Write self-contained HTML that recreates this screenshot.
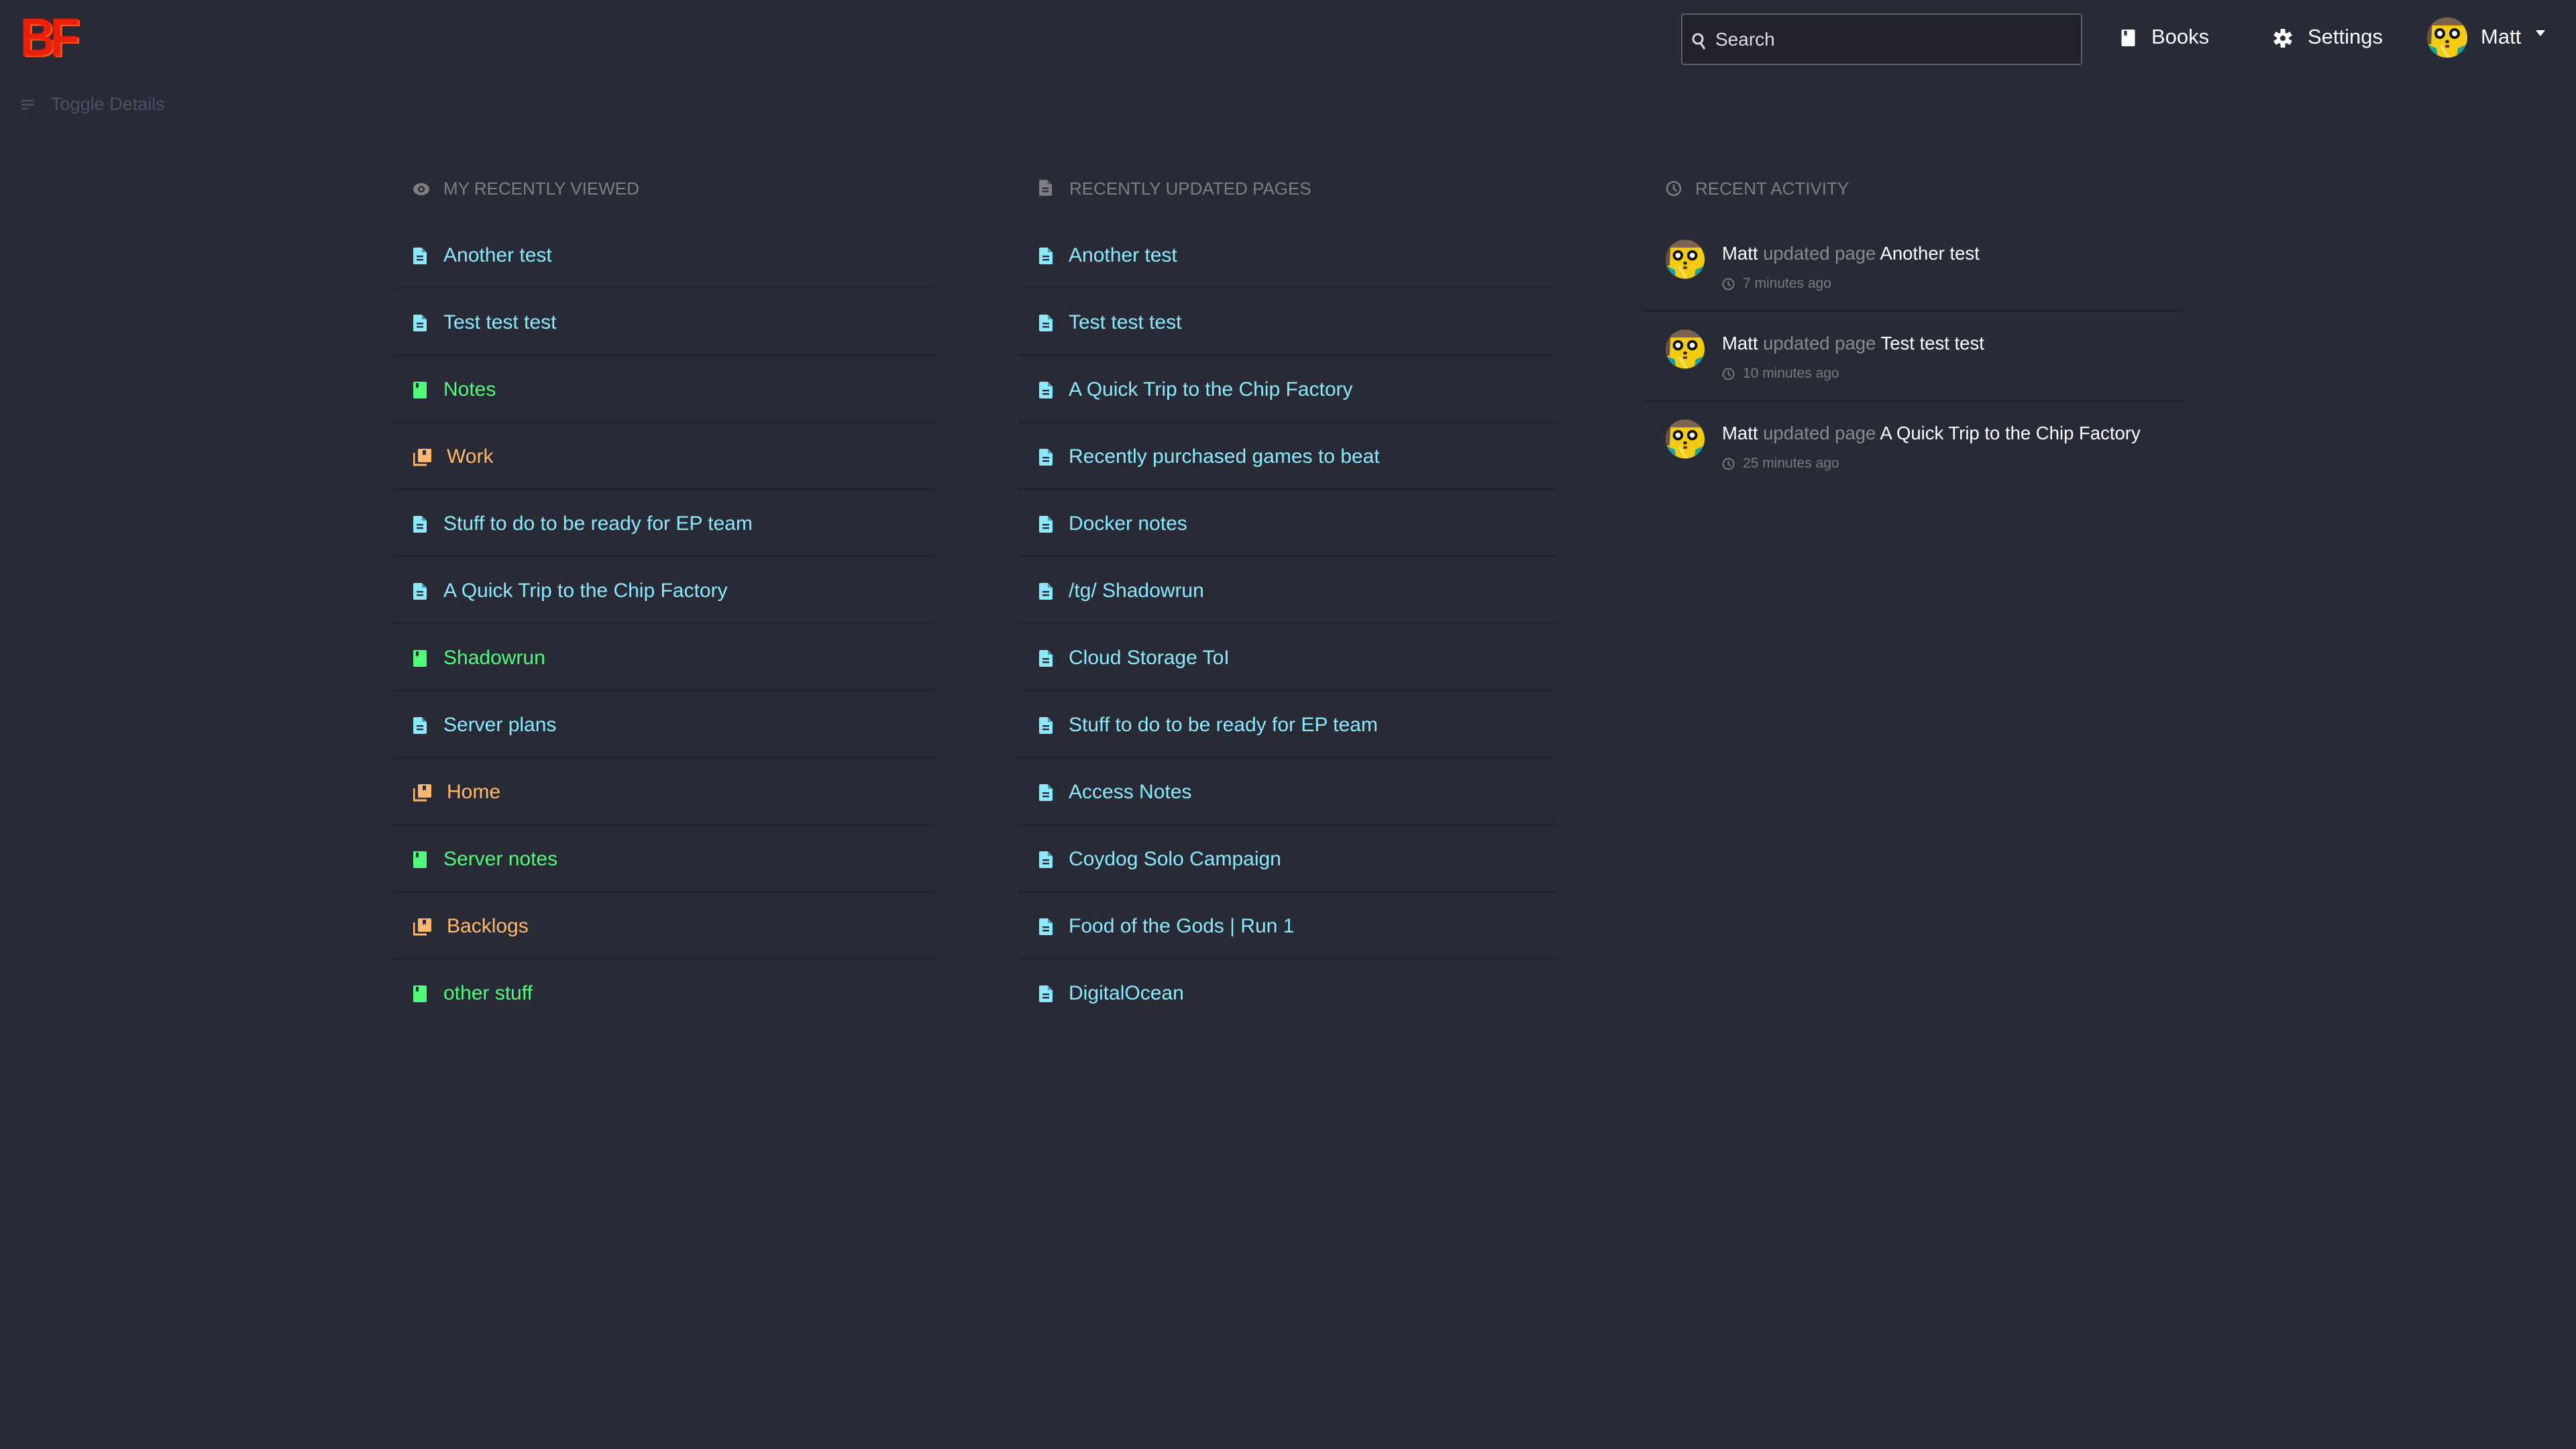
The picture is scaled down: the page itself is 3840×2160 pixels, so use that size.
<!DOCTYPE html>
<html><head><meta charset="utf-8">
<style>
*{margin:0;padding:0;box-sizing:border-box}
html,body{width:3840px;height:2160px;background:#282a36;overflow:hidden}
body{font-family:"Liberation Sans",sans-serif;position:relative;color:#ddd}
.a{position:absolute;white-space:nowrap}
.logo{left:30px;top:10px;font-size:80px;font-weight:bold;color:#e8200c;letter-spacing:-8px;transform:scaleX(.9);transform-origin:left;text-shadow:3px 2px 0 #ff5a1a,0 0 3px #c00}
.search{left:2506px;top:20px;width:598px;height:77px;border:2px solid #5d5f66;border-radius:4px;background:#21222c}
.search span{position:absolute;left:49px;top:21px;font-size:28px;color:#ddd}
.nav{font-size:31px;color:#fff;top:37px}
.toggle{left:30px;top:140px;font-size:27px;color:#4a5068}
.card{position:absolute;top:233px;width:803px}
.head{position:absolute;top:33px;font-size:26px;color:#7e7e7e;white-space:nowrap}
.row{position:absolute;left:0;width:803px;height:100px;border-bottom:3px solid #21222c}
.row .t{position:absolute;top:33px;font-size:30px;white-space:nowrap}
.row svg{position:absolute;top:38px}
.p{color:#8be9fd}.b{color:#50fa7b}.s{color:#ffb86c}
.act{position:absolute;left:0;width:803px;height:134px;border-bottom:3px solid #21222c}
.act .m{position:absolute;left:117px;top:31px;font-size:27.5px;color:#fff;white-space:nowrap}
.act .m i{font-style:normal;color:#8a8a8a}
.act .tm{position:absolute;left:148px;top:80px;font-size:21px;color:#7a7a7a;white-space:nowrap}
.act svg.av{position:absolute;left:33px;top:26px}
</style></head><body>
<svg width="0" height="0" style="position:absolute">
<defs>
<symbol id="av" viewBox="0 0 60 60">
<clipPath id="c"><circle cx="30" cy="30" r="30"/></clipPath>
<g clip-path="url(#c)">
<rect width="60" height="60" fill="#f2cc12"/>
<rect width="60" height="12" fill="#7a6450"/>
<path d="M0 40 L14 46 L16 60 L0 60Z" fill="#1aa0a0"/>
<path d="M60 40 L46 46 L44 60 L60 60Z" fill="#1aa0a0"/>
<path d="M0 0 L8 0 L6 40 L0 40Z" fill="#6a5040"/>
<circle cx="19" cy="24" r="8" fill="#111"/><circle cx="19" cy="24" r="4" fill="#fff"/>
<circle cx="41" cy="24" r="8" fill="#111"/><circle cx="41" cy="24" r="4" fill="#fff"/>
<ellipse cx="30" cy="36" rx="3" ry="2.5" fill="#222"/>
<rect x="27" y="41" width="6" height="4" fill="#6a3020"/>
<path d="M22 40 L34 60 L30 60 L20 44Z" fill="#f8f0a0" opacity=".6"/>
</g></symbol>
<symbol id="pg" viewBox="0 0 20 25"><path d="M2 0H13L20 7V23a2 2 0 0 1-2 2H2a2 2 0 0 1-2-2V2a2 2 0 0 1 2-2Z" fill="currentColor"/><path d="M13 0V7H20" fill="#282a36" opacity=".45"/><rect x="5" y="12" width="10" height="2.4" fill="#282a36"/><rect x="5" y="17" width="10" height="2.4" fill="#282a36"/></symbol>
<symbol id="bk" viewBox="0 0 20 25"><rect width="20" height="25" rx="2" fill="currentColor"/><path d="M4 2H8V10L6 8L4 10Z" fill="#282a36"/></symbol>
<symbol id="sh" viewBox="0 0 27 26"><rect x="7" y="0" width="20" height="20" rx="2" fill="currentColor"/><path d="M14 2H19V10L16.5 8L14 10Z" fill="#282a36"/><path d="M1 6V24H20" fill="none" stroke="currentColor" stroke-width="3"/></symbol>
</defs></svg>

<div class="a logo">BF</div>
<div class="a toggle"><svg width="22" height="22" viewBox="0 0 22 22" style="vertical-align:-3px;margin-right:24px"><path d="M2 5H20M2 11H20M2 17H12" stroke="#4a5068" stroke-width="2.5" fill="none"/></svg>Toggle Details</div>

<div class="a search"><svg width="22" height="26" viewBox="0 0 22 26" style="position:absolute;left:14px;top:27px"><circle cx="9" cy="9" r="7" stroke="#ddd" stroke-width="3" fill="none"/><path d="M13 15L19 24" stroke="#ddd" stroke-width="3"/></svg><span>Search</span></div>
<svg class="a" style="left:3162px;top:44px;color:#fff" width="21" height="25"><use href="#bk"/></svg>
<div class="a nav" style="left:3207px">Books</div>
<svg class="a" style="left:3389px;top:43px" width="28" height="28" viewBox="0 0 28 28"><g fill="#fff" transform="translate(14 14)"><circle r="9"/><rect x="-3.5" y="-14" width="7" height="28" rx="1"/><rect x="-3.5" y="-14" width="7" height="28" rx="1" transform="rotate(60)"/><rect x="-3.5" y="-14" width="7" height="28" rx="1" transform="rotate(120)"/></g><circle cx="14" cy="14" r="4" fill="#282a36"/></svg>
<div class="a nav" style="left:3440px">Settings</div>
<svg class="a" style="left:3618px;top:26px" width="60" height="60"><use href="#av"/></svg>
<div class="a nav" style="left:3698px">Matt</div>
<svg class="a" style="left:3780px;top:45px" width="14" height="10"><path d="M0 0H14L7 9Z" fill="#fff"/></svg>

<div class="card" style="left:588px">
<div class="head" style="left:28px"><svg width="24" height="18" viewBox="0 0 24 18" style="vertical-align:-1px;margin-right:21px"><ellipse cx="12" cy="9" rx="12" ry="9" fill="#7e7e7e"/><circle cx="12" cy="9" r="5" fill="#282a36"/><circle cx="12" cy="9" r="2.5" fill="#7e7e7e"/></svg>MY RECENTLY VIEWED</div>
</div>
<div class="card" style="left:1518px">
<div class="head" style="left:31px"><svg width="19" height="24" style="vertical-align:-2px;margin-right:26px;color:#7e7e7e"><use href="#pg"/></svg>RECENTLY UPDATED PAGES</div>
</div>
<div class="card" style="left:2450px">
<div class="head" style="left:33px"><svg width="24" height="24" viewBox="0 0 24 24" style="vertical-align:-3px;margin-right:20px"><circle cx="12" cy="12" r="10" stroke="#7e7e7e" stroke-width="2.5" fill="none"/><path d="M12 6V12L16 16" stroke="#7e7e7e" stroke-width="2.5" fill="none"/></svg>RECENT ACTIVITY</div>
</div>

<div class="card" style="left:2450px">
<div class="act" style="top:98px"><svg class="av" width="58" height="59"><use href="#av"/></svg><div class="m">Matt <i>updated page</i> Another test</div><div class="tm"><svg width="19" height="19" viewBox="0 0 24 24" style="position:absolute;left:-31px;top:3px"><circle cx="12" cy="12" r="10" stroke="#7a7a7a" stroke-width="2.5" fill="none"/><path d="M12 6V12L16 16" stroke="#7a7a7a" stroke-width="2.5" fill="none"/></svg>7 minutes ago</div></div>
<div class="act" style="top:232px"><svg class="av" width="58" height="59"><use href="#av"/></svg><div class="m">Matt <i>updated page</i> Test test test</div><div class="tm"><svg width="19" height="19" viewBox="0 0 24 24" style="position:absolute;left:-31px;top:3px"><circle cx="12" cy="12" r="10" stroke="#7a7a7a" stroke-width="2.5" fill="none"/><path d="M12 6V12L16 16" stroke="#7a7a7a" stroke-width="2.5" fill="none"/></svg>10 minutes ago</div></div>
<div class="act" style="top:366px;border-bottom:none"><svg class="av" width="58" height="59"><use href="#av"/></svg><div class="m">Matt <i>updated page</i> A Quick Trip to the Chip Factory</div><div class="tm"><svg width="19" height="19" viewBox="0 0 24 24" style="position:absolute;left:-31px;top:3px"><circle cx="12" cy="12" r="10" stroke="#7a7a7a" stroke-width="2.5" fill="none"/><path d="M12 6V12L16 16" stroke="#7a7a7a" stroke-width="2.5" fill="none"/></svg>25 minutes ago</div></div>
</div>

<div class="card" style="left:588px">
<div class="row" style="top:98px"><svg style="left:28px;color:#8be9fd" width="20" height="25"><use href="#pg"/></svg><div class="t p" style="left:73px">Another test</div></div>
<div class="row" style="top:198px"><svg style="left:28px;color:#8be9fd" width="20" height="25"><use href="#pg"/></svg><div class="t p" style="left:73px">Test test test</div></div>
<div class="row" style="top:298px"><svg style="left:28px;color:#50fa7b" width="20" height="25"><use href="#bk"/></svg><div class="t b" style="left:73px">Notes</div></div>
<div class="row" style="top:398px"><svg style="left:28px;color:#ffb86c" width="27" height="26"><use href="#sh"/></svg><div class="t s" style="left:78px">Work</div></div>
<div class="row" style="top:498px"><svg style="left:28px;color:#8be9fd" width="20" height="25"><use href="#pg"/></svg><div class="t p" style="left:73px">Stuff to do to be ready for EP team</div></div>
<div class="row" style="top:598px"><svg style="left:28px;color:#8be9fd" width="20" height="25"><use href="#pg"/></svg><div class="t p" style="left:73px">A Quick Trip to the Chip Factory</div></div>
<div class="row" style="top:698px"><svg style="left:28px;color:#50fa7b" width="20" height="25"><use href="#bk"/></svg><div class="t b" style="left:73px">Shadowrun</div></div>
<div class="row" style="top:798px"><svg style="left:28px;color:#8be9fd" width="20" height="25"><use href="#pg"/></svg><div class="t p" style="left:73px">Server plans</div></div>
<div class="row" style="top:898px"><svg style="left:28px;color:#ffb86c" width="27" height="26"><use href="#sh"/></svg><div class="t s" style="left:78px">Home</div></div>
<div class="row" style="top:998px"><svg style="left:28px;color:#50fa7b" width="20" height="25"><use href="#bk"/></svg><div class="t b" style="left:73px">Server notes</div></div>
<div class="row" style="top:1098px"><svg style="left:28px;color:#ffb86c" width="27" height="26"><use href="#sh"/></svg><div class="t s" style="left:78px">Backlogs</div></div>
<div class="row" style="top:1198px;border-bottom-color:#262833"><svg style="left:28px;color:#50fa7b" width="20" height="25"><use href="#bk"/></svg><div class="t b" style="left:73px">other stuff</div></div>
</div>

<div class="card" style="left:1518px">
<div class="row" style="top:98px"><svg style="left:31px;color:#8be9fd" width="20" height="25"><use href="#pg"/></svg><div class="t p" style="left:75px">Another test</div></div>
<div class="row" style="top:198px"><svg style="left:31px;color:#8be9fd" width="20" height="25"><use href="#pg"/></svg><div class="t p" style="left:75px">Test test test</div></div>
<div class="row" style="top:298px"><svg style="left:31px;color:#8be9fd" width="20" height="25"><use href="#pg"/></svg><div class="t p" style="left:75px">A Quick Trip to the Chip Factory</div></div>
<div class="row" style="top:398px"><svg style="left:31px;color:#8be9fd" width="20" height="25"><use href="#pg"/></svg><div class="t p" style="left:75px">Recently purchased games to beat</div></div>
<div class="row" style="top:498px"><svg style="left:31px;color:#8be9fd" width="20" height="25"><use href="#pg"/></svg><div class="t p" style="left:75px">Docker notes</div></div>
<div class="row" style="top:598px"><svg style="left:31px;color:#8be9fd" width="20" height="25"><use href="#pg"/></svg><div class="t p" style="left:75px">/tg/ Shadowrun</div></div>
<div class="row" style="top:698px"><svg style="left:31px;color:#8be9fd" width="20" height="25"><use href="#pg"/></svg><div class="t p" style="left:75px">Cloud Storage ToI</div></div>
<div class="row" style="top:798px"><svg style="left:31px;color:#8be9fd" width="20" height="25"><use href="#pg"/></svg><div class="t p" style="left:75px">Stuff to do to be ready for EP team</div></div>
<div class="row" style="top:898px"><svg style="left:31px;color:#8be9fd" width="20" height="25"><use href="#pg"/></svg><div class="t p" style="left:75px">Access Notes</div></div>
<div class="row" style="top:998px"><svg style="left:31px;color:#8be9fd" width="20" height="25"><use href="#pg"/></svg><div class="t p" style="left:75px">Coydog Solo Campaign</div></div>
<div class="row" style="top:1098px"><svg style="left:31px;color:#8be9fd" width="20" height="25"><use href="#pg"/></svg><div class="t p" style="left:75px">Food of the Gods | Run 1</div></div>
<div class="row" style="top:1198px;border-bottom-color:#262833"><svg style="left:31px;color:#8be9fd" width="20" height="25"><use href="#pg"/></svg><div class="t p" style="left:75px">DigitalOcean</div></div>
</div>
</body></html>
